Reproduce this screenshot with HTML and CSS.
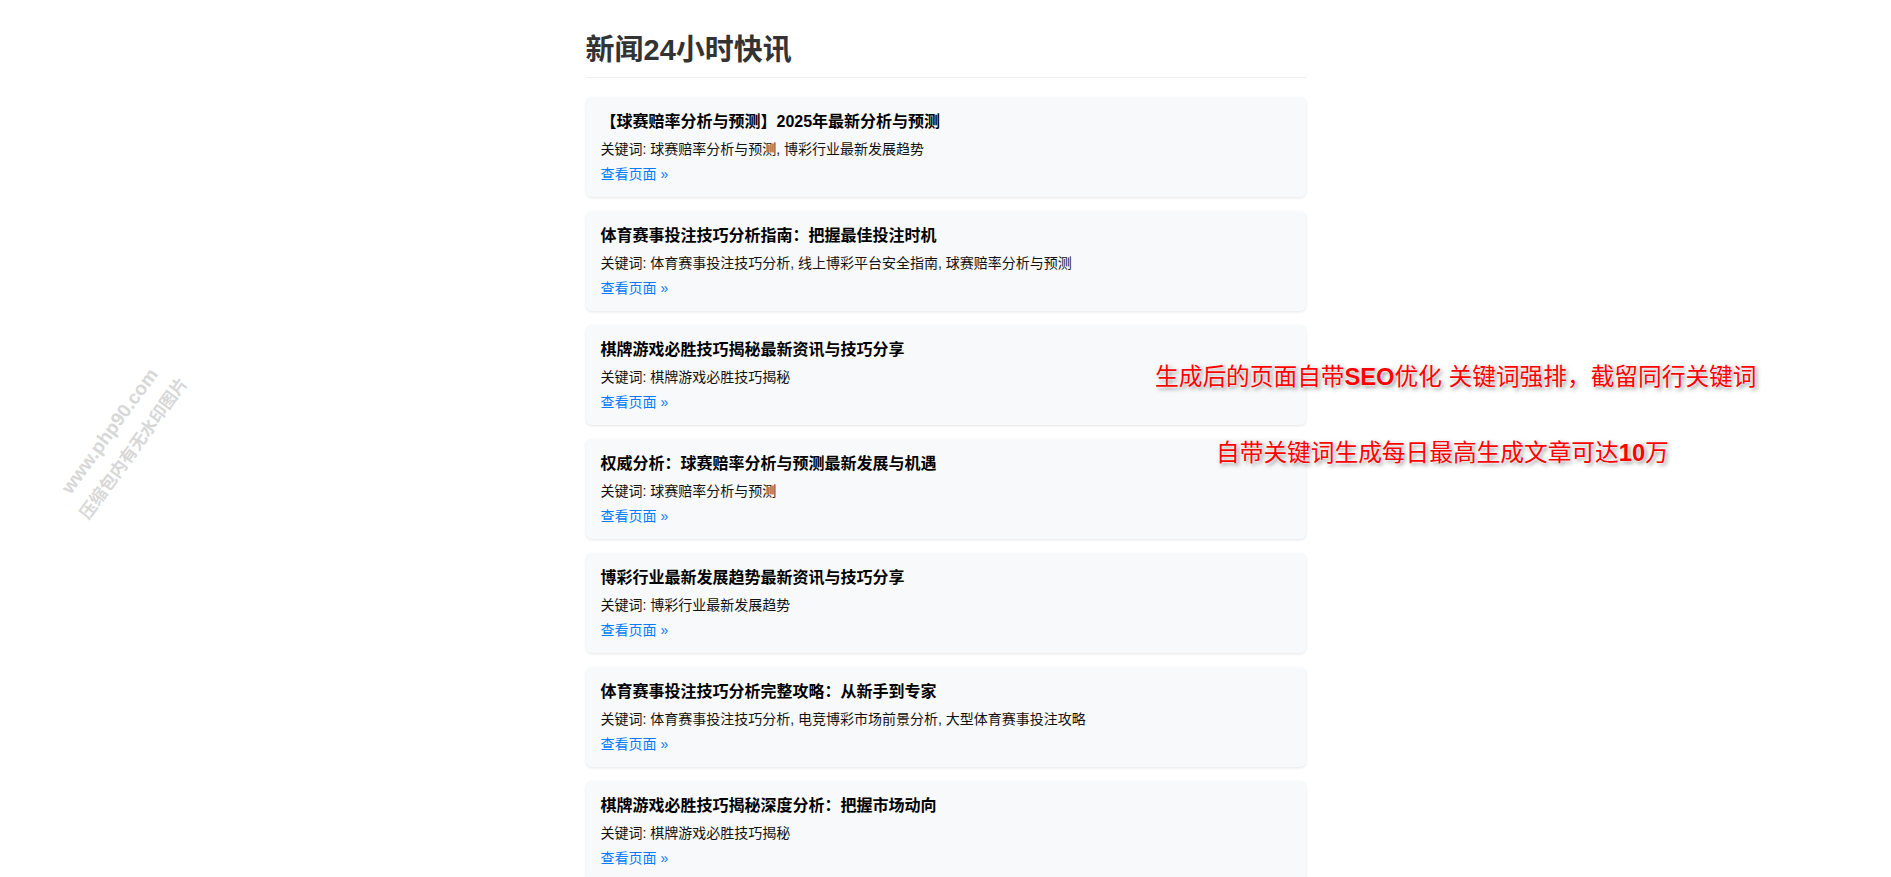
FILE: index.html
```html
<!DOCTYPE html>
<html lang="zh-CN">
<head>
  <meta charset="UTF-8" />
  <meta name="viewport" content="width=device-width, initial-scale=1.0"/>
  <title>新闻24小时快讯</title>
  <link rel="stylesheet" href="styles.css">
</head>
<body>
  <div class="news-container">
    <h1>新闻24小时快讯</h1>

    <div class="news-item">
      <h3>【球赛赔率分析与预测】2025年最新分析与预测</h3>
      <p>关键词: 球赛赔率分析与预测, 博彩行业最新发展趋势</p>
      <a href="#">查看页面 »</a>
    </div>
    <div class="news-item">
      <h3>体育赛事投注技巧分析指南：把握最佳投注时机</h3>
      <p>关键词: 体育赛事投注技巧分析, 线上博彩平台安全指南, 球赛赔率分析与预测</p>
      <a href="#">查看页面 »</a>
    </div>
    <div class="news-item">
      <h3>棋牌游戏必胜技巧揭秘最新资讯与技巧分享</h3>
      <p>关键词: 棋牌游戏必胜技巧揭秘</p>
      <a href="#">查看页面 »</a>
    </div>
    <div class="news-item">
      <h3>权威分析：球赛赔率分析与预测最新发展与机遇</h3>
      <p>关键词: 球赛赔率分析与预测</p>
      <a href="#">查看页面 »</a>
    </div>
    <div class="news-item">
      <h3>博彩行业最新发展趋势最新资讯与技巧分享</h3>
      <p>关键词: 博彩行业最新发展趋势</p>
      <a href="#">查看页面 »</a>
    </div>
    <div class="news-item">
      <h3>体育赛事投注技巧分析完整攻略：从新手到专家</h3>
      <p>关键词: 体育赛事投注技巧分析, 电竞博彩市场前景分析, 大型体育赛事投注攻略</p>
      <a href="#">查看页面 »</a>
    </div>
    <div class="news-item">
      <h3>棋牌游戏必胜技巧揭秘深度分析：把握市场动向</h3>
      <p>关键词: 棋牌游戏必胜技巧揭秘</p>
      <a href="#">查看页面 »</a>
    </div>
  </div>

  <!-- promo captions over the page -->
  <div class="promo promo-one">生成后的页面自带<b>SEO</b>优化 关键词强排，截留同行关键词</div>
  <div class="promo promo-two">自带关键词生成每日最高生成文章可达<b>10</b>万</div>

  <div class="watermark">
    <div class="wm-site">www.php90.com</div>
    <div class="wm-note">压缩包内有无水印图片</div>
  </div>
</body>
</html>
```

FILE: styles.css
```css
body {
  margin: 0;
  padding: 20px 0;
  background: #fff;
  color: #111;
  font-family: "Liberation Sans", "Noto Sans CJK SC", sans-serif;
}
.news-container {
  max-width: 720px;
  margin: 0 auto;
}
h1 {
  font-size: 29px;
  line-height: 34px;
  color: #333;
  margin: 13px 0 19px;
  padding-bottom: 10px;
  border-bottom: 1px solid #eee;
}
.news-item {
  background: #f8f9fa;
  border-radius: 6px;
  box-shadow: 0 1px 3px rgba(0, 0, 0, 0.1);
  padding: 15px 15px 12px;
  margin-bottom: 14px;
}
.news-item h3 {
  font-size: 16px;
  line-height: 19px;
  color: #000;
  margin: 0 0 8px;
}
.news-item p {
  font-size: 14px;
  line-height: 21px;
  margin: 0 0 4px;
}
.news-item a {
  display: block;
  font-size: 14px;
  line-height: 21px;
  color: #007bff;
  text-decoration: none;
}
.promo {
  position: absolute;
  font-size: 23.7px;
  line-height: 30px;
  color: #f00;
  white-space: nowrap;
  text-shadow: 0 0 2px #fff, 0 0 3px #fff, 2px 2px 4px rgba(0, 0, 0, 0.5);
}
.promo-one {
  left: 1155px;
  top: 362px;
}
.promo-two {
  left: 1216px;
  top: 438px;
}
.watermark {
  position: absolute;
  left: 22px;
  top: 410px;
  width: 200px;
  line-height: 30px;
  font-weight: bold;
  text-align: center;
  color: #d8d8d8;
  transform: rotate(-54deg);
}
.wm-site {
  font-size: 19px;
}
.wm-note {
  font-size: 17px;
}
```
